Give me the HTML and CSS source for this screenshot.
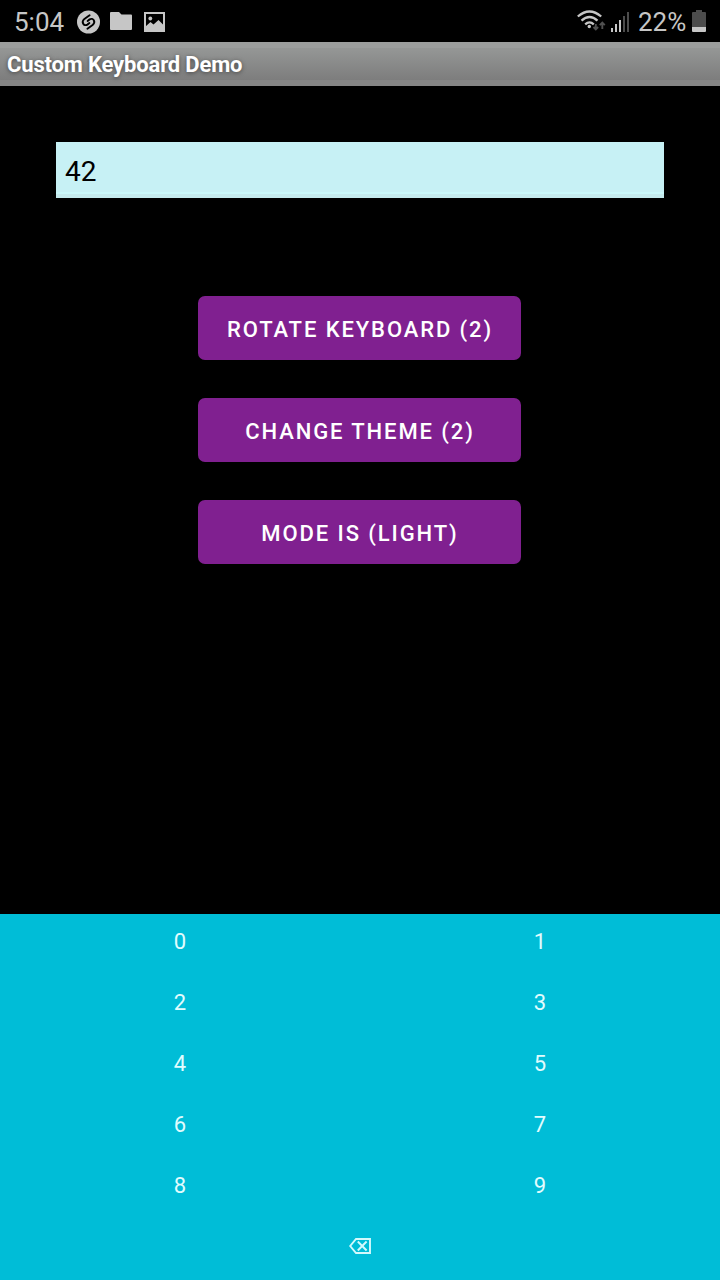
FILE: index.html
```html
<!DOCTYPE html>
<html lang="en">
<head>
<meta charset="utf-8">
<title>Custom Keyboard Demo</title>
<link rel="stylesheet" href="styles.css">
</head>
<body>
<div class="screen">
  <header class="status">
    <span class="clock">5:04</span>
    <svg class="shazam" width="24" height="24" viewBox="0 0 24 24"><circle cx="11.500" cy="12" r="11.500" fill="#c6c6c6"/><path d="M12.600 5.200L7.400 8.900C3.800 12 6.800 16.800 10.400 14.600L12.400 13M10.400 18.800L15.600 15.100C19.200 12 16.200 7.200 12.600 9.400L10.600 11" fill="none" stroke="#000" stroke-width="1.900" stroke-linecap="round"/></svg>
    <svg class="folder" width="22" height="18" viewBox="0 0 22 18"><path d="M1 0H9L11.500 2.500H21Q22 2.500 22 3.500V17Q22 18 21 18H1Q0 18 0 17V1Q0 0 1 0Z" fill="#c6c6c6"/></svg>
    <svg class="picture" width="21" height="20" viewBox="0 0 21 20"><rect x="1" y="1" width="19" height="18" fill="none" stroke="#c6c6c6" stroke-width="2"/><circle cx="6.300" cy="6.500" r="1.900" fill="#c6c6c6"/><path d="M1 15L6.500 10L9.500 12.500L14.500 8L20 13.500V19H1Z" fill="#c6c6c6"/></svg>
    <svg class="wifi" width="29" height="22" viewBox="0 0 29 22"><g fill="none" stroke="#c6c6c6" stroke-width="2.300"><path d="M.8 6.500Q12.500-3.600 24.200 6.500"/><path d="M4.500 10.600Q12.500 3.400 20.500 10.600"/><path d="M8.200 14.300Q12.500 10.400 16.800 14.300"/></g><circle cx="12.300" cy="16.500" r="1.700" fill="#c6c6c6"/><path d="M18.800 14V19M16.500 17L18.800 19.300L21.100 17M25.300 19V13M22.800 15.200L25.300 12.700L27.800 15.200" fill="none" stroke="#505050" stroke-width="1.900"/></svg>
    <svg class="signal" width="19" height="20" viewBox="0 0 19 20"><path d="M0 16h2v4H0zM4 12h2v8H4zM8 8h2v12H8z" fill="#c6c6c6"/><path d="M12 4h2v16h-2zM16 0h2v20h-2z" fill="#4c4c4c"/></svg>
    <span class="percent">22%</span>
    <svg class="battery" width="14" height="22" viewBox="0 0 14 22"><path d="M4 0H10V2H13Q14 2 14 3V17H0V3Q0 2 1 2H4Z" fill="#4c4c4c"/><path d="M0 17H14V21Q14 22 13 22H1Q0 22 0 21Z" fill="#c6c6c6"/></svg>
  </header>
  <h1 class="title">Custom Keyboard Demo</h1>
  <main class="content">
    <div class="field">42</div>
    <div class="actions">
      <button class="action">ROTATE KEYBOARD (2)</button>
      <button class="action">CHANGE THEME (2)</button>
      <button class="action">MODE IS (LIGHT)</button>
    </div>
  </main>
  <section class="keyboard">
    <span class="key">0</span><span class="key">1</span>
    <span class="key">2</span><span class="key">3</span>
    <span class="key">4</span><span class="key">5</span>
    <span class="key">6</span><span class="key">7</span>
    <span class="key">8</span><span class="key">9</span>
    <span class="key wide"><svg width="22" height="16" viewBox="0 0 22 16"><path d="M7 1H21V15H7L1.200 8ZM8.800 3.500L17.600 12.500M17.600 3.500L8.800 12.500" fill="none" stroke="#d3f9fc" stroke-width="1.900"/></svg></span>
  </section>
</div>
</body>
</html>
```
FILE: styles.css
```css
body { margin: 0; background: #000; }
.screen {
  width: 720px;
  height: 1280px;
  display: flex;
  flex-direction: column;
  background: #000;
  font-family: Roboto, "Liberation Sans", sans-serif;
}
.status {
  box-sizing: border-box;
  height: 42px;
  padding: 0 14px;
  display: flex;
  align-items: center;
  color: #c6c6c6;
  font-size: 26px;
  line-height: 42px;
}
.status svg { flex: none; }
.clock, .percent { padding-top: 2px; }
.clock { width: 63px; }
.shazam { margin-top: 1px; }
.folder { margin-left: 9px; }
.picture { margin-left: 12px; margin-top: 1px; }
.wifi { margin-left: auto; }
.signal { margin-left: 5px; margin-top: 1px; }
.percent { width: 54px; margin-left: 8px; }
.title {
  box-sizing: border-box;
  height: 44px;
  margin: 0;
  padding-left: 7px;
  border-top: 6px solid #9c9e9d;
  border-bottom: 6px solid #858585;
  background: linear-gradient(#959796, #7d7d7d);
  color: #fff;
  font-size: 22px;
  font-weight: 700;
  letter-spacing: -0.16px;
  line-height: 34px;
  text-shadow: 0 1px 4px #444;
}
.content { flex: 1; padding: 56px 56px 0; }
.field {
  box-sizing: border-box;
  height: 56px;
  padding-left: 9px;
  border-bottom: 4px solid #c5ebee;
  background: #c7f1f5;
  box-shadow: inset 0 -2px #caf8fa;
  color: #000;
  font-size: 28px;
  line-height: 59px;
}
.actions {
  margin-top: 98px;
  display: flex;
  flex-direction: column;
  align-items: center;
  gap: 38px;
}
.action {
  width: 323px;
  height: 64px;
  margin-right: 1px;
  padding: 3px 0 0 1px;
  border: 0;
  border-radius: 7px;
  background: #802090;
  color: #fff;
  font: 500 22px Roboto, "Liberation Sans", sans-serif;
  letter-spacing: 1.9px;
}
.keyboard {
  height: 366px;
  display: grid;
  grid-template-columns: 1fr 1fr;
  grid-template-rows: repeat(6, 61px);
  background: #00bdd7;
  color: #e2fcfe;
  font-size: 22px;
  text-align: center;
}
.key { line-height: 55px; }
.wide {
  grid-column: 1 / -1;
  display: flex;
  justify-content: center;
  align-items: flex-start;
  padding-top: 19px;
}
```
